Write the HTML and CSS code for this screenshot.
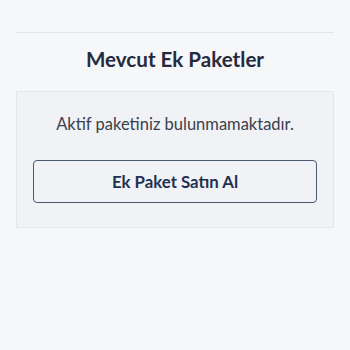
FILE: index.html
```html
<!DOCTYPE html>
<html lang="tr">
<head>
<meta charset="utf-8">
<link rel="stylesheet" href="styles.css">
</head>
<body>
<main class="page">
  <div class="divider"></div>
  <h2 class="title">Mevcut Ek Paketler</h2>
  <section class="card">
    <p class="empty">Aktif paketiniz bulunmamaktadır.</p>
    <button class="buy" type="button">Ek Paket Satın Al</button>
  </section>
</main>
</body>
</html>
```

FILE: styles.css
```css
html, body {
  margin: 0;
  padding: 0;
  background: #f6f7f9;
  font-family: Lato, "Noto Sans", sans-serif;
}
.page {
  padding: 32px 16px 0 16px;
  display: flex;
  flex-direction: column;
}
.divider {
  height: 1px;
  background: #e3e5e9;
}
.title {
  margin: 0;
  padding: 13px 0 19px;
  text-align: center;
  font-size: 20.6px;
  font-weight: 700;
  color: #252b3d;
  line-height: 26px;
}
.card {
  background: #f0f2f5;
  border: 1px solid #e5e7eb;
  padding: 20px 16px 24px;
  display: flex;
  flex-direction: column;
  align-items: stretch;
}
.empty {
  margin: 0;
  text-align: center;
  font-size: 16.5px;
  line-height: 24px;
  color: #3b404c;
}
.buy {
  margin-top: 24px;
  height: 43px;
  background: transparent;
  border: 1.5px solid #4a5870;
  border-radius: 4px;
  font-family: inherit;
  font-size: 16.8px;
  font-weight: 700;
  color: #1f3152;
}
```
